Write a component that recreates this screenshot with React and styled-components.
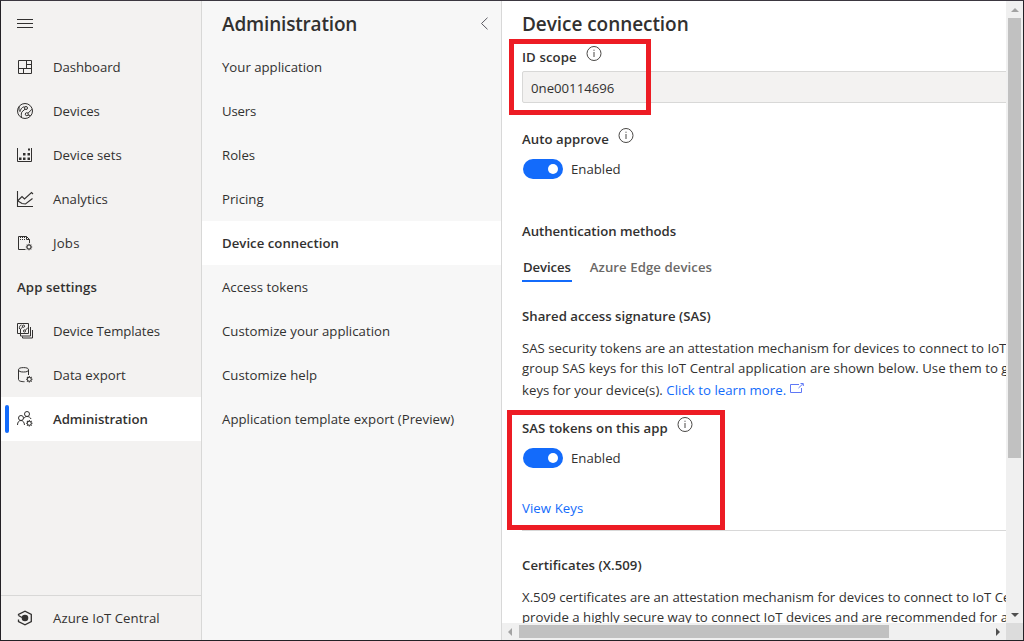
import React from "react";
import styled, { createGlobalStyle } from "styled-components";

const Global = createGlobalStyle`
  * { box-sizing: border-box; }
  body { margin: 0; background: #232126; overflow: hidden; }
`;

const Shell = styled.div`
  position: relative;
  display: grid;
  grid-template-columns: 201px 300px 1fr;
  width: 1024px;
  height: 641px;
  overflow: hidden;
  border: 1px solid #232126;
  border-top-color: #3b3740;
  background: #fff;
  color: #323130;
  font: 13.2px/20px "Open Sans", "Noto Sans", sans-serif;
  white-space: nowrap;
`;

const Sidebar = styled.nav`
  display: flex;
  flex-direction: column;
  background: #f3f2f1;
  border-right: 1px solid #d8d8d7;
`;

const Menu = styled.nav`
  display: flex;
  flex-direction: column;
  background: #f7f7f7;
  border-right: 1px solid #d8d8d8;
`;

const NavItem = styled.a`
  position: relative;
  display: flex;
  align-items: center;
  gap: 20px;
  height: 44px;
  padding-left: 16px;
  background: ${(p) => (p.$active ? "#fff" : "transparent")};
  font-weight: ${(p) => (p.$strong ? 600 : 400)};
  letter-spacing: ${(p) => p.$track || 0}px;
`;

const Marker = styled.span`
  position: absolute;
  left: 4px;
  top: 8px;
  width: 4px;
  height: 28px;
  border-radius: 2px;
  background: #136bfb;
`;

const Footer = styled.div`
  margin-top: auto;
  border-top: 1px solid #d8d8d7;
`;

const MenuItem = styled.a`
  display: flex;
  align-items: center;
  height: 44px;
  padding-left: 20px;
  background: ${(p) => (p.$active ? "#fff" : "transparent")};
  font-weight: ${(p) => (p.$active ? 600 : 400)};
  letter-spacing: ${(p) => p.$track || 0}px;
`;

const MenuHeader = styled.header`
  display: flex;
  align-items: center;
  justify-content: space-between;
  height: 44px;
  padding: 2px 12px 0 20px;
`;

const Title = styled.h1`
  margin: 0;
  font-size: 19px;
  line-height: 46px;
  font-weight: 600;
  letter-spacing: ${(p) => p.$track || 0}px;
`;

const Pane = styled.main`
  display: grid;
  grid-template-columns: minmax(0, 1fr) 17px;
  grid-template-rows: 622px 17px;
  min-width: 0;
`;

const Content = styled.div`
  display: flex;
  flex-direction: column;
  align-items: flex-start;
  padding-left: 20px;
  overflow: hidden;
`;

const Label = styled.div`
  display: flex;
  height: 20px;
  margin-top: ${(p) => p.$gap || 0}px;
  gap: 9px;
  font-weight: 600;
  letter-spacing: ${(p) => p.$track || 0}px;
  svg { margin-top: -1px; flex: none; }
`;

const ScopeField = styled.div`
  display: flex;
  flex: none;
  align-items: center;
  width: 700px;
  height: 32px;
  margin-top: 4px;
  padding: 1px 0 0 8px;
  border: 1px solid #d8d8d7;
  border-radius: 2px;
  background: #f3f2f1;
`;

const ToggleRow = styled.div`
  display: flex;
  align-items: center;
  gap: 8px;
  height: 20px;
  margin: 10px 0 0 1px;
`;

const Toggle = styled.span`
  display: flex;
  align-items: center;
  justify-content: flex-end;
  width: 40px;
  height: 20px;
  padding-right: 5px;
  border-radius: 10px;
  background: #136bfb;
  &::after {
    content: "";
    width: 10px;
    height: 10px;
    border-radius: 50%;
    background: #fff;
  }
`;

const Tabs = styled.div`
  display: flex;
  gap: 17px;
  margin-top: 16px;
`;

const Tab = styled.div`
  height: 25px;
  padding: 0 1px;
  border-bottom: 2px solid ${(p) => (p.$active ? "#136bfb" : "transparent")};
  color: ${(p) => (p.$active ? "#323130" : "#6b6967")};
  font-weight: 600;
  letter-spacing: ${(p) => p.$track || 0}px;
`;

const Paragraph = styled.div`
  margin-top: 12px;
`;

const Line = styled.div`
  line-height: ${(p) => p.$height || 20}px;
  height: ${(p) => p.$height || 20}px;
  letter-spacing: ${(p) => p.$track || 0}px;
`;

const Link = styled.a`
  color: #136bfb;
  svg { margin-left: 4px; vertical-align: 1px; }
`;

const KeysLink = styled(Link)`
  margin-top: 30px;
  letter-spacing: 0.08px;
`;

const Divider = styled.hr`
  flex: none;
  width: 700px;
  height: 1px;
  margin: 12px 0 4px;
  border: 0;
  background: #d8d8d8;
`;

const VerticalBar = styled.div`
  display: flex;
  flex-direction: column;
  align-items: center;
  justify-content: space-between;
  padding: 7px 0 6px;
  background: #f0f0f0;
`;

const VerticalThumb = styled.div`
  width: 13px;
  height: 440px;
  margin: 6px 0 auto;
  background: #c1c1c1;
`;

const HorizontalBar = styled.div`
  display: flex;
  align-items: center;
  padding: 0 6px;
  background: #f0f0f0;
`;

const HorizontalThumb = styled.div`
  width: 370px;
  height: 13px;
  margin: 0 auto 0 7px;
  background: #c1c1c1;
`;

const Corner = styled.div`
  background: #dcdcdc;
`;

const Highlight = styled.div`
  position: absolute;
  left: ${(p) => p.$x}px;
  top: ${(p) => p.$y}px;
  width: ${(p) => p.$w}px;
  height: ${(p) => p.$h}px;
  border: 5px solid #ed1c24;
`;

const Icon = ({ children, width = 1 }) => (
  <svg width="16" height="16" viewBox="0 0 16 16" fill="none" stroke="#323130" strokeWidth={width} overflow="visible">
    {children}
  </svg>
);

const Gear = ({ x, y }) => (
  <g transform={`translate(${x} ${y})`}>
    <circle r="2" />
    <path strokeWidth="1.1" d="M0-2V-3.2M0 2V3.2M-2 0H-3.2M2 0H3.2M-1.4-1.4L-2.3-2.3M1.4-1.4L2.3-2.3M-1.4 1.4L-2.3 2.3M1.4 1.4L2.3 2.3" />
  </g>
);

const icons = {
  menu: <Icon><path d="M0 4.5H16M0 8.5H16M0 12.5H16" /></Icon>,
  dashboard: (
    <Icon>
      <path d="M1.5 1.5H14.5V14.5H1.5ZM9.5 1.5V10M1.5 9.5H14.5M6.5 9.5V14.5M9.5 5.5H14.5" />
    </Icon>
  ),
  devices: (
    <Icon>
      <circle cx="8" cy="8" r="7.5" />
      <circle cx="9" cy="5" r="1.5" />
      <circle cx="9.8" cy="11.2" r="1.5" />
      <path d="M8 6.2L5 8.8C4 10 4.4 12 4.4 14.2M2.4 3.4C1.5 5.5 2 7.5 3 8.6C3.6 7 4 4.5 7.4 3.6M11 10.2L15 6.2M11 12L13.6 12.6" />
    </Icon>
  ),
  sets: (
    <Icon>
      <path d="M.5 1V14.500H14.500V1" />
      <path stroke="none" fill="#323130" d="M2 10.500h2.500v2.500H2zM6 10.500h2.500v2.500H6zM10.500 10.500h2.500v2.500h-2.500zM6 6h2.500v2.500H6zM10.500 6h2.500v2.500h-2.500zM11 1.500h2v2h-2z" />
    </Icon>
  ),
  analytics: (
    <Icon width={1.1}>
      <path d="M.5 0V15.500H16M1 9.500L5 5.500L7.500 8L14.500 1.500L16 3M1 10L5 12.500L8.500 13L15.500 7.500" />
    </Icon>
  ),
  jobs: (
    <Icon>
      <path d="M8.500 14.500H1.500V1.500H9.500L12.500 4.500V8M9.500 1.500V4.500H12.500" />
      <path strokeDasharray="1 1" d="M3 2.500H9M3 4.500H9" />
      <Gear x={12} y={12} />
    </Icon>
  ),
  templates: (
    <Icon>
      <path d="M.5 .5H11.500V10.500H.5ZM3.500 11V13H13.500V4M5.500 13.500V15H15.500V7" />
      <circle cx="6.500" cy="3.200" r="1.100" />
      <circle cx="7.500" cy="8" r="1.100" />
      <path d="M5.800 4L3.500 6V10M8.300 7.300L11 4.500M2.500 6C2 4 3 2 4.500 2" />
    </Icon>
  ),
  data: (
    <Icon>
      <ellipse cx="6.500" cy="2.800" rx="5" ry="2.200" />
      <path d="M1.500 3V12.500C1.500 14 4 14.700 7.500 14.700M11.500 3V8" />
      <Gear x={12.300} y={12.300} />
    </Icon>
  ),
  admin: (
    <Icon>
      <circle cx="10" cy="3" r="2.500" />
      <circle cx="4" cy="7" r="2.500" />
      <path d="M.5 14C.5 11 2 9.500 4 9.500C5.800 9.500 7.300 11 7.500 14M6.800 7.500C7.500 6 8.800 5.500 10 5.500C12 5.500 13.500 6.500 14 8" />
      <Gear x={12.300} y={12.300} />
    </Icon>
  ),
  central: (
    <Icon width={1.3}>
      <path d="M1.500 5.500V4.500L8 1.200L14.300 4.500V11.500L8 14.800L1.500 11.500V9.500" />
      <path d="M1.500 5.500L5 7.500" />
      <circle cx="8" cy="8" r="3.300" fill="#323130" stroke="none" />
    </Icon>
  ),
};

const Info = () => (
  <svg width="16" height="16" viewBox="0 0 16 16" fill="none" stroke="#4a4846">
    <circle cx="8" cy="7.5" r="7" />
    <path d="M8 6V11M8 3.700V4.800" />
  </svg>
);

const Chevron = () => (
  <svg width="9" height="14" viewBox="0 0 9 14" fill="none" stroke="#5a5860">
    <path d="M7.500 .7L1.500 6.500L7.500 12.300" />
  </svg>
);

const External = () => (
  <svg width="14" height="11" viewBox="0 0 14 11" fill="none" stroke="#5f78f6">
    <path d="M9 1.500H.5V9.500H11.500V5M8.500 5L13 .7M10.500 .5H13.300V3" />
  </svg>
);

const Arrow = ({ d, color = "#505050", w, h }) => (
  <svg width={w} height={h} fill={color}><path d={d} /></svg>
);

const primary = [
  ["dashboard", "Dashboard", -0.05],
  ["devices", "Devices", 0],
  ["sets", "Device sets", 0],
  ["analytics", "Analytics", 0.06],
  ["jobs", "Jobs", 0.2],
];

const menu = [
  ["Your application", 0],
  ["Users", -0.15],
  ["Roles", 0],
  ["Pricing", 0],
  ["Device connection", 0.03],
  ["Access tokens", 0.03],
  ["Customize your application", 0.04],
  ["Customize help", 0.03],
  ["Application template export (Preview)", 0.04],
];

export default function App() {
  return (
    <>
      <Global />
      <Shell>
        <Sidebar>
          <NavItem>{icons.menu}</NavItem>
          {primary.map(([icon, text, track]) => (
            <NavItem key={icon} $track={track}>{icons[icon]}<span>{text}</span></NavItem>
          ))}
          <NavItem $strong $track={0.1}>App settings</NavItem>
          <NavItem $track={-0.06}>{icons.templates}<span>Device Templates</span></NavItem>
          <NavItem>{icons.data}<span>Data export</span></NavItem>
          <NavItem $active $strong $track={-0.06}><Marker />{icons.admin}<span>Administration</span></NavItem>
          <Footer>
            <NavItem $track={0.06}>{icons.central}<span>Azure IoT Central</span></NavItem>
          </Footer>
        </Sidebar>
        <Menu>
          <MenuHeader><Title $track={-0.17}>Administration</Title><Chevron /></MenuHeader>
          {menu.map(([text, track]) => (
            <MenuItem key={text} $active={text === "Device connection"} $track={track}>{text}</MenuItem>
          ))}
        </Menu>
        <Pane>
          <Content>
            <Title $track={-0.06}>Device connection</Title>
            <Label $track={0.1}><span>ID scope</span><Info /></Label>
            <ScopeField>0ne00114696</ScopeField>
            <Label $gap={26} $track={0.05}><span>Auto approve</span><Info /></Label>
            <ToggleRow><Toggle /><span>Enabled</span></ToggleRow>
            <Label $gap={42} $track={-0.04}>Authentication methods</Label>
            <Tabs>
              <Tab $active $track={-0.12}>Devices</Tab>
              <Tab $track={0.07}>Azure Edge devices</Tab>
            </Tabs>
            <Label $gap={24} $track={0.02}>Shared access signature (SAS)</Label>
            <Paragraph>
              <Line $track={0.02}>SAS security tokens are an attestation mechanism for devices to connect to IoT Central. The</Line>
              <Line $track={0.05}>group SAS keys for this IoT Central application are shown below. Use them to generate</Line>
              <Line $height={24} $track={0.04}>keys for your device(s). <Link>Click to learn more.<External /></Link></Line>
            </Paragraph>
            <Label $gap={16} $track={0.07}><span>SAS tokens on this app</span><Info /></Label>
            <ToggleRow><Toggle /><span>Enabled</span></ToggleRow>
            <KeysLink>View Keys</KeysLink>
            <Divider />
            <Label $gap={20} $track={0.05}>Certificates (X.509)</Label>
            <Paragraph>
              <Line $track={0.02}>X.509 certificates are an attestation mechanism for devices to connect to IoT Central. They</Line>
              <Line $track={0.01}>provide a highly secure way to connect IoT devices and are recommended for a production</Line>
            </Paragraph>
          </Content>
          <VerticalBar>
            <Arrow w={8} h={4} color="#a3a3a3" d="M0 4L4 0L8 4Z" />
            <VerticalThumb />
            <Arrow w={8} h={4} d="M0 0L4 4L8 0Z" />
          </VerticalBar>
          <HorizontalBar>
            <Arrow w={4} h={8} color="#a3a3a3" d="M4 0L0 4L4 8Z" />
            <HorizontalThumb />
            <Arrow w={4} h={8} d="M0 0L4 4L0 8Z" />
          </HorizontalBar>
          <Corner />
        </Pane>
        <Highlight $x={508} $y={38} $w={142} $h={76} />
        <Highlight $x={506} $y={409} $w={218} $h={120} />
      </Shell>
    </>
  );
}
